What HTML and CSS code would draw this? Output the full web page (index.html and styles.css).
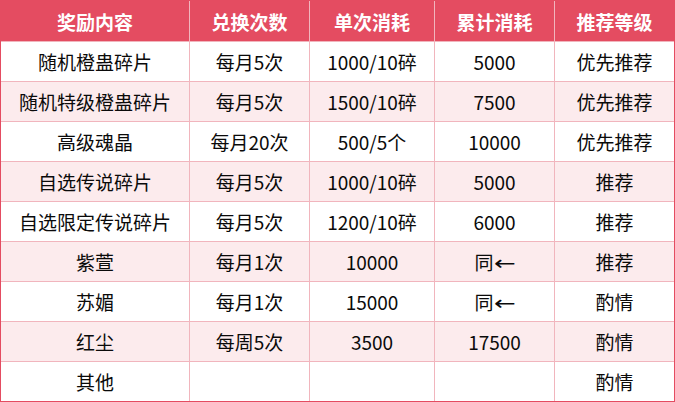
FILE: index.html
```html
<!DOCTYPE html>
<html lang="zh">
<head>
<meta charset="utf-8">
<link rel="stylesheet" href="styles.css">
</head>
<body>
<table class="rewards">
  <colgroup>
    <col class="c1"><col class="c2"><col class="c3"><col class="c4"><col class="c5">
  </colgroup>
  <thead>
    <tr><th>奖励内容</th><th>兑换次数</th><th>单次消耗</th><th>累计消耗</th><th>推荐等级</th></tr>
  </thead>
  <tbody>
    <tr><td>随机橙蛊碎片</td><td>每月5次</td><td>1000/10碎</td><td>5000</td><td>优先推荐</td></tr>
    <tr><td>随机特级橙蛊碎片</td><td>每月5次</td><td>1500/10碎</td><td>7500</td><td>优先推荐</td></tr>
    <tr><td>高级魂晶</td><td>每月20次</td><td>500/5个</td><td>10000</td><td>优先推荐</td></tr>
    <tr><td>自选传说碎片</td><td>每月5次</td><td>1000/10碎</td><td>5000</td><td>推荐</td></tr>
    <tr><td>自选限定传说碎片</td><td>每月5次</td><td>1200/10碎</td><td>6000</td><td>推荐</td></tr>
    <tr><td>紫萱</td><td>每月1次</td><td>10000</td><td>同<span class="arrow">←</span></td><td>推荐</td></tr>
    <tr><td>苏媚</td><td>每月1次</td><td>15000</td><td>同<span class="arrow">←</span></td><td>酌情</td></tr>
    <tr><td>红尘</td><td>每周5次</td><td>3500</td><td>17500</td><td>酌情</td></tr>
    <tr><td>其他</td><td></td><td></td><td></td><td>酌情</td></tr>
  </tbody>
</table>
</body>
</html>
```
FILE: styles.css
```css
html, body {
  margin: 0;
  padding: 0;
  background: #ffffff;
}
.rewards {
  width: 675px;
  table-layout: fixed;
  border-collapse: separate;
  border-spacing: 0;
  border: 1px solid #e44c61;
  font-family: "Microsoft YaHei", "Noto Sans CJK SC", "Noto Sans", sans-serif;
  font-size: 19px;
  color: #0a0a0a;
}
.c1 { width: 189px; }
.c2 { width: 120px; }
.c3 { width: 125px; }
.c4 { width: 120px; }
.c5 { width: 119px; }
.rewards th,
.rewards td {
  padding: 0;
  text-align: center;
  vertical-align: middle;
  border-right: 1px solid #f1b5bd;
  border-bottom: 1px solid #f1b5bd;
  white-space: nowrap;
  overflow: hidden;
}
.rewards th:last-child,
.rewards td:last-child {
  border-right: none;
}
.rewards th {
  height: 40px;
  background: #e44c61;
  color: #ffffff;
  font-weight: bold;
}
.rewards td {
  height: 39px;
}
.rewards tbody tr:nth-child(even) td {
  background: #fcebed;
}
.rewards tbody tr:last-child td {
  border-bottom: none;
}
.arrow {
  display: inline-block;
  font-family: "DejaVu Sans", sans-serif;
  font-size: 20px;
  width: 20px;
  transform: scaleX(1.3);
  margin-left: 1px;
}
```
